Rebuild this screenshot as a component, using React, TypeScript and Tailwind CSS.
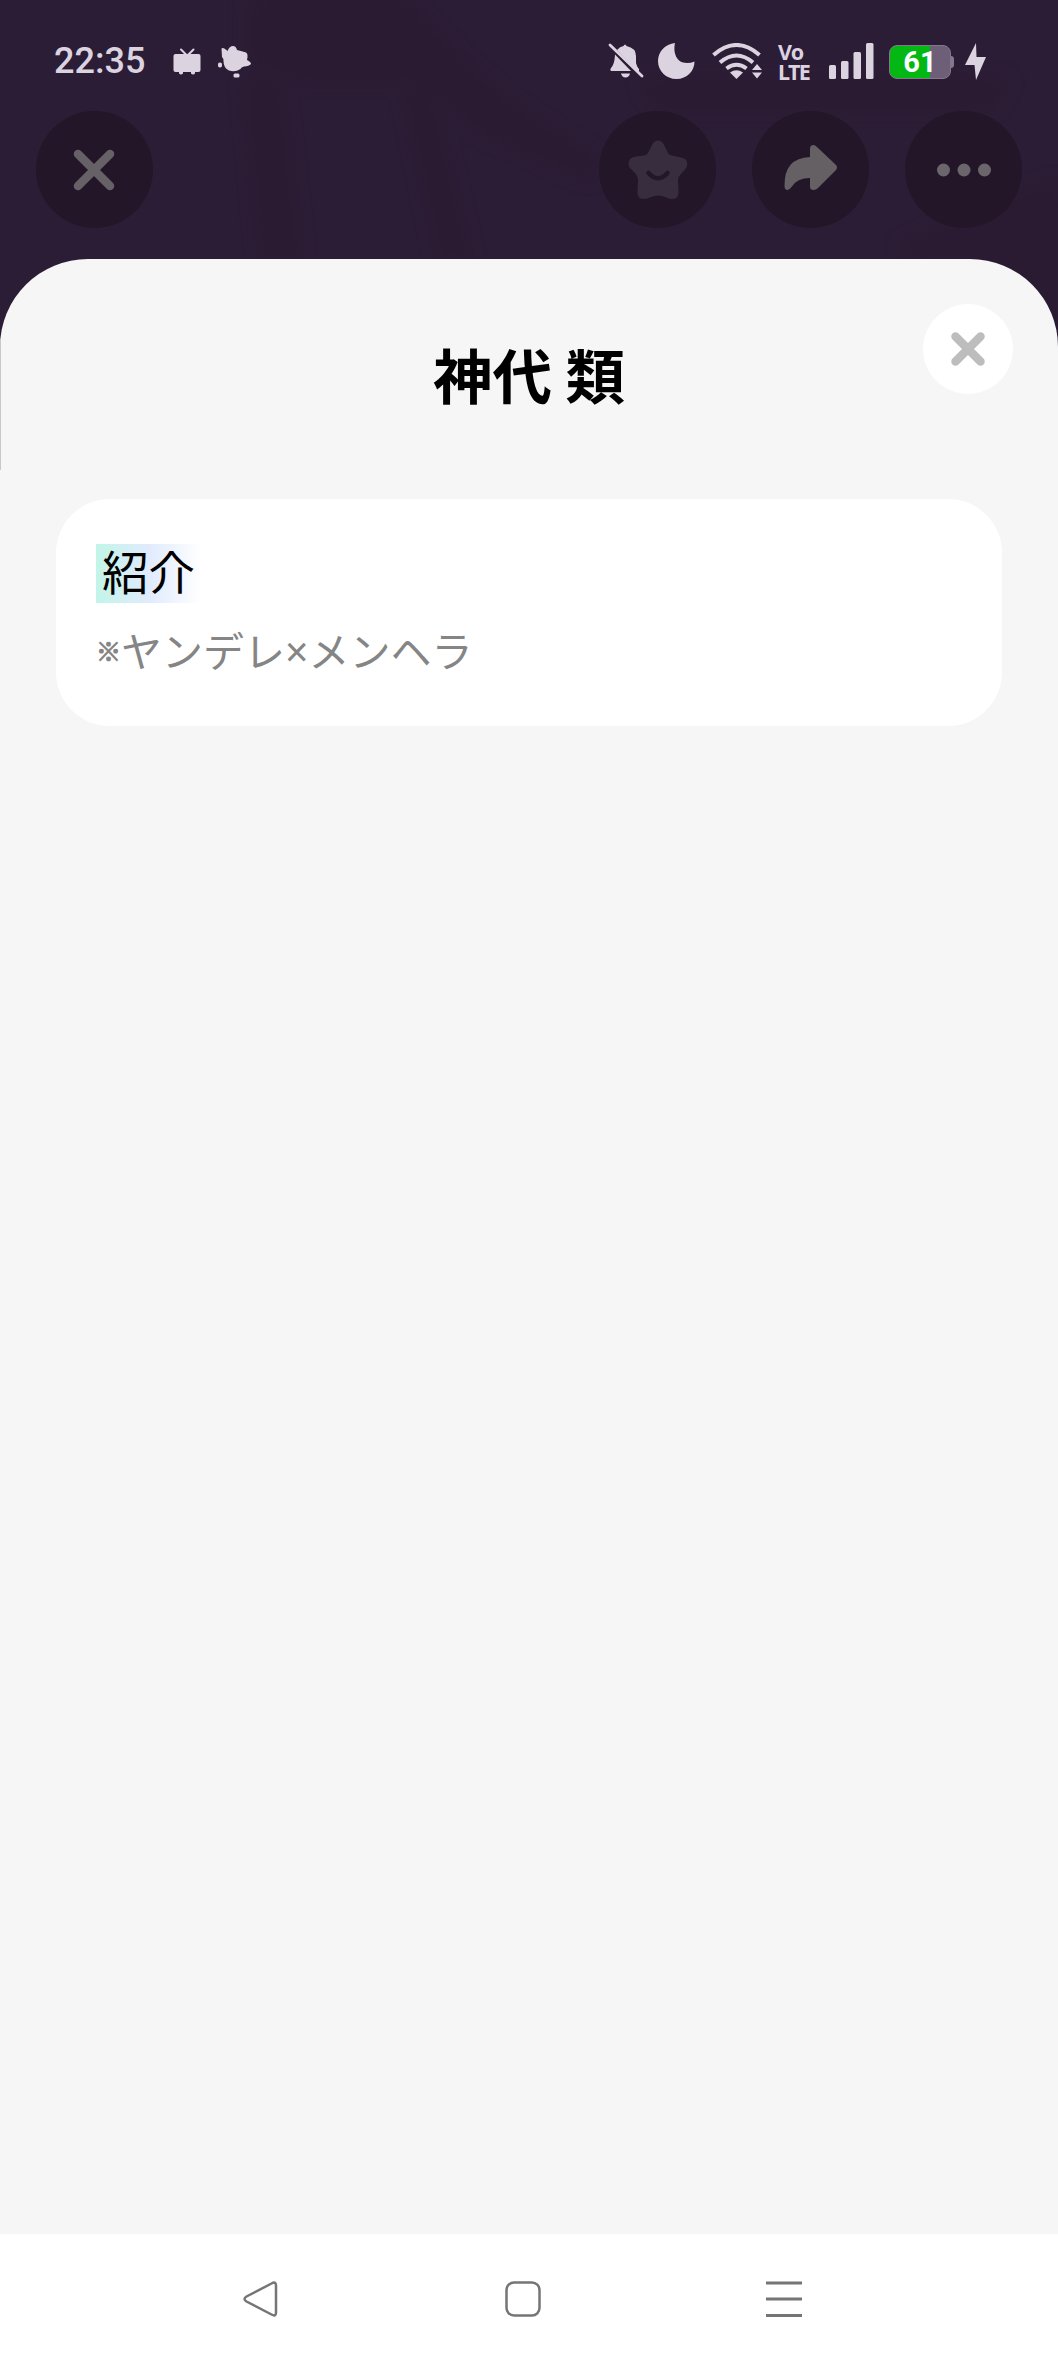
import type { ReactNode } from "react";

function RoundButton({ label, children }: { label: string; children: ReactNode }) {
  return (
    <button
      aria-label={label}
      className="flex size-[117px] items-center justify-center rounded-full bg-[#231629]"
    >
      {children}
    </button>
  );
}

function Backdrop() {
  return (
    <svg
      className="absolute inset-0"
      width="1058"
      height="360"
      viewBox="0 0 1058 360"
      fill="none"
      aria-hidden="true"
    >
      <defs>
        <filter id="soft" x="-20%" y="-20%" width="140%" height="140%" colorInterpolationFilters="sRGB">
          <feGaussianBlur stdDeviation="8" />
        </filter>
      </defs>
      <g filter="url(#soft)" fill="#2a1b32">
        <path d="M250 0H405L460 60L520 110L600 160L590 180L480 130L420 80H300L250 60Z" />
        <path d="M245 80H280L300 260H262Z" />
        <path d="M405 90L440 260H470L430 90Z" />
        <path d="M640 80H1010L990 110H660Z" />
        <path d="M900 245L1058 180V360H1000Z" />
      </g>
    </svg>
  );
}

function StatusBar() {
  return (
    <div className="flex h-[111px] items-start pt-[43px] text-[#dcd3e1]">
      <span className="ml-[54px] w-[119px] font-[Roboto] text-[36px] leading-9 font-medium">
        22:35
      </span>
      <svg width="28" height="36" viewBox="0 0 28 36" fill="currentColor">
        <path d="M8 6.500l6 6M20.500 6.500l-6 6" stroke="currentColor" strokeWidth="2" strokeLinecap="round" />
        <rect x="0.500" y="11" width="27" height="18" rx="2" />
        <path d="M6 28h4v2.500q-2 2-4 0zM18 28h4v2.500q-2 2-4 0z" />
      </svg>
      <svg className="ml-[17px]" width="34" height="36" viewBox="0 0 34 36" fill="currentColor">
        <path d="M3.500 5.500Q5 3.500 9.500 8Q11.500 3 15 3Q18 3 19 7Q24 8 28 9.500Q30.500 11 29 17Q33 19 33 21Q31 23 26 23.500Q23 24 22.500 26Q17 29.500 11 27.500Q5.500 25 5.500 18Q6 16 4 14Z" />
        <rect x="0" y="19.500" width="4" height="5" rx="1.800" />
        <rect x="15.500" y="30.500" width="6" height="4" rx="1.500" />
      </svg>

      <svg className="ml-auto" width="36" height="36" viewBox="0 0 36 36" fill="currentColor">
        <path d="M9 7Q12 3.500 15.500 3Q17 0 18.500 3Q28 5 28 13V20Q29 24 31 26V28H29Z" />
        <path d="M7 11.500L23 28H3Q1.500 27 3 25Q6.500 21 6.800 14Z" />
        <path d="M13 30.500h9q-1 4-4.500 4t-4.500-4z" />
        <path d="M2 2L34 33" stroke="currentColor" strokeWidth="2.800" strokeLinecap="round" />
      </svg>
      <svg className="ml-[14px]" width="38" height="37" viewBox="0 0 38 37" fill="currentColor">
        <path d="M17 0C15 9 18 20 29 20Q33 20 36.500 18.500C36.500 28 29 36 18.500 36C8 36 0 28 0 18C0 9 7 1 17 0Z" />
      </svg>
      <svg className="ml-4" width="51" height="37" viewBox="0 0 51 37" fill="none" stroke="currentColor" strokeWidth="4">
        <path d="M1.500 12Q24.500-8 47.500 12M8 19.500Q24.500 5.500 41 19.500M14.500 25.500Q24.500 18 34.500 25.500" />
        <path d="M18 29.500Q24.500 25 31 29.500L24.500 36Z" fill="currentColor" stroke="none" />
        <path d="M45 21L50 27H40ZM45 35.500L50 29.500H40Z" fill="currentColor" stroke="none" />
      </svg>
      <div className="-mt-px ml-[15px] w-[35px] font-['Noto_Sans'] text-[21.5px] leading-[19.5px] font-bold tracking-[-1.6px]">
        <div className="tracking-[-0.8px]">Vo</div>
        <div>LTE</div>
      </div>
      <svg className="ml-[16px]" width="45" height="36" viewBox="0 0 45 36" fill="currentColor">
        <rect x="0" y="22" width="7" height="14" rx="1.500" />
        <rect x="12" y="18" width="7.500" height="18" rx="1.500" />
        <rect x="24.500" y="9" width="7.500" height="27" rx="1.500" />
        <rect x="37" y="0" width="7.500" height="36" rx="1.500" />
      </svg>
      <div className="mt-[2px] ml-[15px] flex items-center">
        <div className="flex h-[34px] w-[62px] items-center justify-center overflow-hidden rounded-[8px] border border-[#85768c] bg-[linear-gradient(90deg,#04b813_66%,#6d5f77_66%)] font-[Roboto] text-[29px] leading-none font-bold text-white">
          61
        </div>
        <div className="h-3 w-[3px] rounded-r-[3px] bg-[#85768c]" />
      </div>
      <svg className="mr-[71px] ml-[11px]" width="22" height="38" viewBox="0 0 22 38" fill="currentColor">
        <path d="M11 0L0 22H9.500L11 37L21 14H11.500Z" />
      </svg>
    </div>
  );
}

function Toolbar() {
  return (
    <div className="flex gap-9 px-9">
      <RoundButton label="閉じる">
        <svg className="mr-px" width="42" height="42" viewBox="0 0 42 42" stroke="#666166" strokeWidth="8.500" strokeLinecap="round">
          <path d="M5 5L37 37M37 5L5 37" />
        </svg>
      </RoundButton>
      <div className="grow" />
      <RoundButton label="お気に入り">
        <svg width="60" height="60" viewBox="0 0 60 60">
          <path
            d="M30 0.500Q34 0.500 36 5L40 13Q41 15 44 15.500L55 18Q60 20 59 26Q58 29 52 35Q50 37 50 40L50.500 53Q50 59 44 59Q41 59 37 57Q30 54 23 57Q19 59 15 59Q9 58 9.500 52L10 40Q10 37 8 34L2 28Q-1 24 2 19Q4 17 8 16.500L16 15.500Q19 15 20 13L24 5Q26 0.500 30 0.500Z"
            fill="#382d3e"
          />
          <path d="M20.500 33Q30 43.500 39.500 33" fill="none" stroke="#241629" strokeWidth="4.500" strokeLinecap="round" />
        </svg>
      </RoundButton>
      <RoundButton label="共有">
        <svg className="mb-1" width="54" height="46" viewBox="0 0 54 46" fill="#646064">
          <path d="M26 4Q26 0 29.500 0Q31 0 33 2L52 20Q54 22.500 52 25L34 43Q32 45 29.500 45Q26 45 26 41.500V33Q13 33 7.500 42Q5.500 45 3.500 45Q0.500 45 0.500 41Q0 13 26 12Z" />
        </svg>
      </RoundButton>
      <RoundButton label="メニュー">
        <svg width="54" height="14" viewBox="0 0 54 14" fill="#6b666b">
          <circle cx="6.500" cy="7" r="6.500" />
          <circle cx="27" cy="7" r="6.500" />
          <circle cx="47.500" cy="7" r="6.500" />
        </svg>
      </RoundButton>
    </div>
  );
}

function NavigationBar() {
  return (
    <nav className="flex h-[130px] items-center bg-white pl-[243px]">
      <svg width="36" height="36" viewBox="0 0 36 36" fill="none" stroke="#757575" strokeWidth="2.500">
        <path d="M28.500 2.500Q33 0 33 4.500V31.500Q33 36 28.500 33.500L3.500 20.500Q-0.500 18 3.500 15.500Z" />
      </svg>
      <svg className="ml-[226px]" width="36" height="36" viewBox="0 0 36 36" fill="none" stroke="#757575" strokeWidth="2.500">
        <rect x="1.500" y="1.500" width="33" height="33" rx="7.500" />
      </svg>
      <svg className="ml-[225px]" width="36" height="36" viewBox="0 0 36 36" stroke="#757575" strokeWidth="3">
        <path d="M0 2H36M0 18H36M0 34.500H36" />
      </svg>
    </nav>
  );
}

export default function App() {
  return (
    <div className="relative flex h-[2364px] w-[1058px] flex-col overflow-hidden bg-[#2c1d36] font-['Noto_Sans_CJK_JP',sans-serif]">
      <Backdrop />
      <header className="relative h-[259px]">
        <StatusBar />
        <Toolbar />
      </header>

      <main className="relative grow rounded-t-[88px] bg-[#f6f6f6] px-14">
        <h1 className="h-[240px] pt-[74px] text-center text-[59.5px] leading-[80px] font-bold text-black">
          神代 類
        </h1>
        <button
          aria-label="閉じる"
          className="absolute top-[45px] right-[45px] flex size-[90px] items-center justify-center rounded-full bg-white"
        >
          <svg width="36" height="36" viewBox="0 0 36 36" stroke="#bdbdbd" strokeWidth="8.500" strokeLinecap="round">
            <path d="M5.500 5.500L30.500 30.500M30.500 5.500L5.500 30.500" />
          </svg>
        </button>

        <section className="h-[227px] rounded-[54px] bg-white px-10 pt-[45px]">
          <h2 className="h-[59px] w-[106px] bg-linear-to-r from-[#c2f5e8] via-[#e0ebfd] to-white pl-[6px] text-[46.5px] leading-[51px] text-black">
            紹介
          </h2>
          <p className="mt-[16px] flex text-[41px] leading-[60px] text-[#858585]">
            <span className="w-[25px] pt-px text-[25px] font-bold [-webkit-text-stroke:1px_#858585]">
              ※
            </span>
            <span>
              ヤンデレ<span className="font-['Noto_Sans']">×</span>メンヘラ
            </span>
          </p>
        </section>
        <div className="absolute top-[80px] left-0 h-[131px] w-px bg-[#c9c9c9]" />
      </main>

      <NavigationBar />
    </div>
  );
}
